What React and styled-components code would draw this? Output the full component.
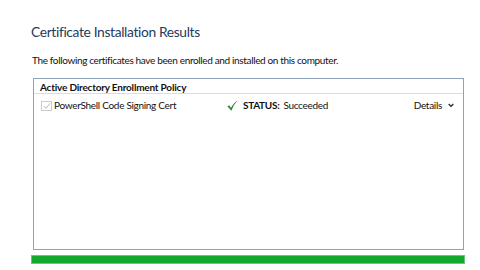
import React from 'react';
import styled, { createGlobalStyle } from 'styled-components';

const GlobalStyle = createGlobalStyle`
    html, body {
        margin: 0;
        padding: 0;
        background: #ffffff;
    }
    body {
        font-family: Lato, "Noto Sans", sans-serif;
        color: #000000;
    }
`;

const certificates = [
    { name: 'PowerShell Code Signing Cert', status: 'Succeeded' },
];

const App = () => {
    return (
        <>
            <GlobalStyle />
            <Page>
                <Title>Certificate Installation Results</Title>
                <Intro>The following certificates have been enrolled and installed on this computer.</Intro>
                <ResultBox>
                    <PolicyHeader>Active Directory Enrollment Policy</PolicyHeader>
                    {certificates.map((cert) => (
                        <CertRow key={cert.name}>
                            <CertName>
                                <CheckBox>
                                    <svg width="8" height="8" viewBox="0 0 8 8">
                                        <path d="M0.8 4 L3 6.3 L7.2 1.2" fill="none" stroke="#b8b8b8" strokeWidth="1" />
                                    </svg>
                                </CheckBox>
                                {cert.name}
                            </CertName>
                            <Status>
                                <svg width="11" height="11" viewBox="0 0 11 11">
                                    <path d="M0.4 6.3 L2.1 5.2 L3.9 7.8 Q6.4 3 10.6 0.3 Q7.2 3.9 4.3 10.7 Z" fill="#2c862a" />
                                </svg>
                                <StatusLabel>STATUS:</StatusLabel>
                                {cert.status}
                            </Status>
                            <Details>
                                Details
                                <svg width="6" height="5" viewBox="0 0 6 5">
                                    <path d="M0.7 1 L3 3.4 L5.3 1" fill="none" stroke="#222" strokeWidth="1.3" />
                                </svg>
                            </Details>
                        </CertRow>
                    ))}
                </ResultBox>
                <ProgressBar />
            </Page>
        </>
    );
};

// Styled Components
const Page = styled.main`
    display: flex;
    flex-direction: column;
    width: 480px;
    height: 270px;
    box-sizing: border-box;
    padding: 22px 16px 0 31px;
`;

const Title = styled.h1`
    margin: 0;
    font-weight: 400;
    font-size: 13.8px;
    letter-spacing: -0.35px;
    line-height: 20px;
    color: #1f3a5c;
`;

const Intro = styled.p`
    margin: 11px 0 0 1px;
    font-size: 10px;
    letter-spacing: -0.35px;
    line-height: 14px;
    color: #111111;
`;

const ResultBox = styled.section`
    margin: 11px 0 0 2px;
    height: 172px;
    box-sizing: border-box;
    border: 1px solid #8ea3b8;
    display: flex;
    flex-direction: column;
`;

const PolicyHeader = styled.div`
    padding: 2px 6px 0 6px;
    border-bottom: 1px solid #d9dde2;
    font-size: 10px;
    font-weight: 700;
    letter-spacing: -0.2px;
    line-height: 12px;
    color: #111111;
`;

const CertRow = styled.div`
    display: grid;
    grid-template-columns: 186px 1fr auto;
    align-items: center;
    padding: 5px 9px 0 7px;
    font-size: 10px;
    letter-spacing: -0.3px;
    line-height: 13px;
    color: #111111;
`;

const CertName = styled.div`
    display: flex;
    align-items: center;
    gap: 2px;
`;

const CheckBox = styled.span`
    display: inline-flex;
    align-items: center;
    justify-content: center;
    width: 9px;
    height: 8px;
    border: 1px solid #cccccc;
`;

const Status = styled.div`
    display: flex;
    align-items: center;
    gap: 5px;
`;

const StatusLabel = styled.span`
    font-weight: 700;
    margin-right: -1px;
`;

const Details = styled.div`
    display: flex;
    align-items: center;
    gap: 6px;
`;

const ProgressBar = styled.div`
    margin-top: 5px;
    height: 7px;
    width: 432px;
    background: #12a82c;
    border: 1px solid #66c978;
`;

export default App;
